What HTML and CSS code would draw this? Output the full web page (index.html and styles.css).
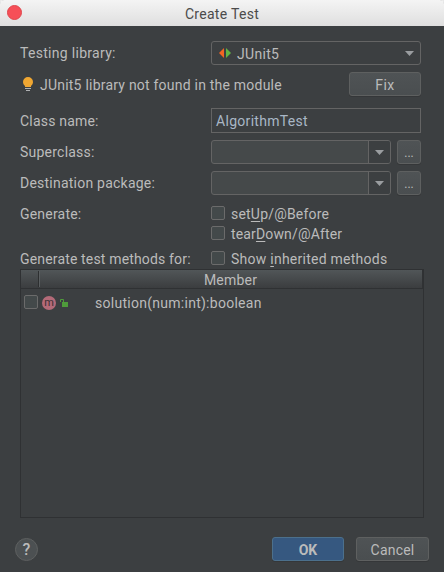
FILE: index.html
```html
<!DOCTYPE html>
<html lang="en">
<head>
<meta charset="utf-8">
<title>Create Test</title>
<link rel="stylesheet" href="styles.css">
</head>
<body>
<div class="dialog">
  <header class="titlebar"><span class="close"></span><h1>Create Test</h1></header>
  <main class="content">
    <div class="row library">
      <span class="label">Testing library:</span>
      <div class="select">
        <svg width="12" height="10" viewBox="0 0 12 10"><path d="M5 0v10L0 5z" fill="#f26522"/><path d="M7 0v10l5-5z" fill="#62b543"/></svg>
        <span class="value">JUnit5</span>
        <svg class="arrow" width="9" height="5" viewBox="0 0 9 5"><path d="M0 0h9L4.500 5z"/></svg>
      </div>
    </div>
    <div class="row notice">
      <svg class="bulb" width="10" height="14" viewBox="0 0 10 14"><path d="M5 0a5 5 0 0 0-5 5c0 2 1.200 3 2 4v1h6V9c.8-1 2-2 2-4a5 5 0 0 0-5-5z" fill="#f0a732"/><path d="M2 11h6v1H2zM3 13h4v1H3z" fill="#afb1b3"/></svg>
      <span class="message">JUnit5 library not found in the module</span>
      <button class="button">Fix</button>
    </div>
    <div class="row name">
      <span class="label">Class name:</span>
      <div class="field">AlgorithmTest</div>
    </div>
    <div class="row super">
      <span class="label">Superclass:</span>
      <div class="combo"><span class="drop"><svg class="arrow" width="9" height="5" viewBox="0 0 9 5"><path d="M0 0h9L4.500 5z"/></svg></span></div>
      <button class="button browse">...</button>
    </div>
    <div class="row package">
      <span class="label">Destination package:</span>
      <div class="combo"><span class="drop"><svg class="arrow" width="9" height="5" viewBox="0 0 9 5"><path d="M0 0h9L4.500 5z"/></svg></span></div>
      <button class="button browse">...</button>
    </div>
    <div class="row generate">
      <span class="label">Generate:</span>
      <span class="check"></span><span class="option setup">set<u>U</u>p/@Before</span>
    </div>
    <div class="row teardown">
      <span class="label"></span>
      <span class="check"></span><span class="option down">tear<u>D</u>own/@After</span>
    </div>
    <div class="row methods">
      <span class="label for">Generate test methods for:</span>
      <span class="check"></span><span class="option show">Show <u>i</u>nherited methods</span>
    </div>
    <section class="table">
      <div class="head"><span class="first"></span><span class="member">Member</span></div>
      <div class="item">
        <span class="check"></span>
        <span class="method">m</span>
        <svg class="lock" width="9" height="8" viewBox="0 0 9 8"><path d="M2 3h6v5H2z" fill="#4f9b3b"/><path d="M.5 3V.5h3V3" fill="none" stroke="#4f9b3b"/></svg>
        <span class="signature">solution(num:int):boolean</span>
      </div>
    </section>
  </main>
  <footer class="footer">
    <button class="help">?</button>
    <button class="button primary">OK</button>
    <button class="button cancel">Cancel</button>
  </footer>
</div>
</body>
</html>
```
FILE: styles.css
```css
* { box-sizing: border-box; }
body { margin: 0; background: #e8e8e8; color: #bbb; font: 14px/20px Roboto, sans-serif; letter-spacing: .2px; }
button { padding: 0; font: inherit; letter-spacing: inherit; color: inherit; }
svg { display: block; flex: none; }
.dialog { width: 444px; height: 572px; display: flex; flex-direction: column; background: #3c3f41; border-radius: 5px 5px 0 0; }
.titlebar { height: 26px; flex: none; display: grid; grid-template-columns: 22px 1fr 22px; align-items: center; background: linear-gradient(#f4f4f4, #dfdfdf); color: #4b4b4b; border-radius: 4px 4px 0 0; }
.close { width: 15px; height: 15px; margin: -1px 0 0 7px; border: 1px solid #df464c; border-radius: 50%; background: #f64f57; }
h1 { margin: 2px 0 0; font-size: 14px; font-weight: 400; text-align: center; letter-spacing: .3px; }
.content { padding: 15px 20px 0; flex: 1; }
.row { display: flex; align-items: center; height: 24px; white-space: nowrap; }
.label { width: 191px; flex: none; }
.library .label { letter-spacing: .3px; }
.for { letter-spacing: .16px; }
.select { width: 210px; height: 24px; display: flex; align-items: center; border: 1px solid #646464; border-radius: 3px; padding: 0 6px 0 7px; }
.value { flex: 1; margin: 2px 0 0 6px; letter-spacing: .3px; }
.arrow { fill: #9a9da0; }
.notice { margin-top: 7px; }
.bulb { margin: 0 7px 0 3px; }
.message { flex: 1; margin-top: 2px; letter-spacing: .22px; }
.button { width: 72px; height: 24px; flex: none; border: 1px solid #5e6060; border-radius: 3px; background: linear-gradient(#4f5355, #4a4e50); box-shadow: 0 1px #353739; padding-top: 2px; }
.notice .button { margin-right: 3px; letter-spacing: .5px; }
.name { height: 25px; margin-top: 12px; }
.field { width: 210px; height: 25px; border: 1px solid #646464; padding: 2px 4px; color: #a9b7c6; letter-spacing: .3px; }
.super, .package { margin-top: 7px; }
.super .label, .package .label { letter-spacing: .23px; }
.combo { width: 180px; height: 24px; margin-right: 6px; display: flex; justify-content: flex-end; border: 1px solid #646464; border-radius: 3px; background: #45494a; }
.drop { width: 22px; display: grid; place-items: center; border-left: 1px solid #646464; border-radius: 0 2px 2px 0; background: #3c3f41; }
.button.browse { width: 24px; font-size: 12px; letter-spacing: 0; }
.check { width: 14px; height: 14px; flex: none; border: 1px solid #6b6b6b; border-radius: 2px; background: #43494a; }
.option { margin: 2px 0 0 6px; }
.down { letter-spacing: .15px; }
.show { letter-spacing: .25px; }
u { text-decoration-thickness: 1px; text-underline-offset: 2px; }
.generate { margin-top: 11px; height: 14px; }
.teardown { margin-top: 6px; height: 14px; }
.methods { margin-top: 11px; height: 14px; }
.generate .label, .methods .label { margin-top: 2px; }
.table { width: 404px; height: 249px; margin-top: 4px; border: 1px solid #2f3133; }
.head { height: 19px; display: flex; border-bottom: 1px solid #2f3133; background: linear-gradient(#515658, #3b3d3f); box-shadow: inset -1px 0 #303234; }
.first { width: 19px; height: 16px; margin-top: 1px; border-right: 1px solid #5a5e60; box-shadow: inset -1px 0 #2d2f30; }
.member { flex: 1; padding-right: 2px; text-align: center; line-height: 21px; }
.item { display: flex; align-items: center; height: 26px; padding-left: 3px; }
.method { width: 14px; height: 14px; margin: 1px 0 0 4px; border-radius: 50%; background: #b36a78; color: #3b3035; font-size: 11px; line-height: 13px; text-align: center; letter-spacing: 0; }
.lock { margin: 2px 0 0 4px; }
.signature { margin: 2px 0 0 26px; letter-spacing: .27px; }
.footer { height: 35px; flex: none; display: flex; align-items: flex-start; padding: 0 15px; }
.help { width: 23px; height: 23px; margin: 1px auto 0 0; border: 1px solid #5e6060; border-radius: 50%; background: #4c5052; font-size: 16px; font-weight: 500; line-height: 21px; letter-spacing: 0; }
.primary { margin-right: 12px; background: #365880; border-color: #4c708c; font-weight: 700; letter-spacing: 0; }
.cancel { width: 73px; }
```
